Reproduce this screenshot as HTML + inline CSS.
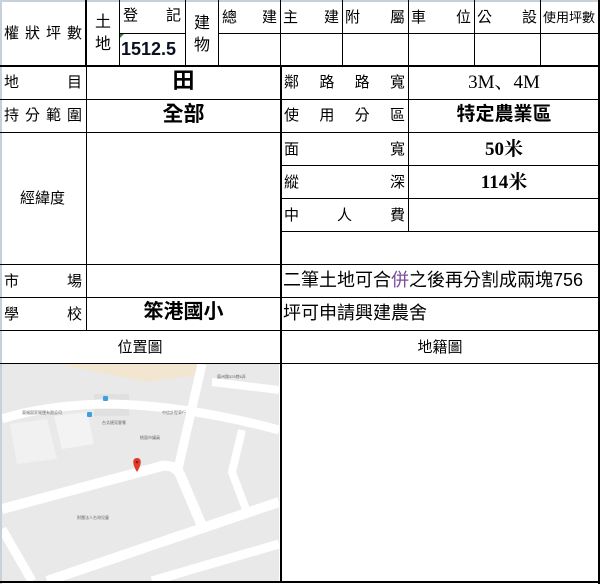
<!DOCTYPE html>
<html><head><meta charset="utf-8"><style>
*{margin:0;padding:0;box-sizing:border-box}
body{width:600px;height:584px;background:#fff;position:relative;overflow:hidden;font-family:"Liberation Sans","Noto Sans CJK TC","WenQuanYi Zen Hei",sans-serif;color:#000}
.h,.v{position:absolute;background:#000}
.t{position:absolute;white-space:nowrap;font-size:15px;line-height:1}
.j{position:absolute;display:flex;justify-content:space-between;font-size:15px;line-height:1}
.c{position:absolute;text-align:center;font-size:15px;line-height:1}
.b{font-weight:bold}
.s{font-family:"Liberation Serif","Noto Serif CJK SC",serif}
</style></head><body>
<div style="position:absolute;left:0;top:0;width:2px;height:584px;background:#c8d0dc"></div>
<div style="position:absolute;left:0;top:0;width:600px;height:2px;background:#c8d0dc"></div>
<div class="h" style="left:119px;top:33px;width:66px;height:1px"></div>
<div class="h" style="left:219px;top:33px;width:381px;height:1px"></div>
<div class="h" style="left:0;top:65px;width:600px;height:2px"></div>
<div class="h" style="left:0;top:99px;width:600px;height:1px"></div>
<div class="h" style="left:0;top:132px;width:600px;height:1px"></div>
<div class="h" style="left:280px;top:165px;width:320px;height:1px"></div>
<div class="h" style="left:280px;top:198px;width:320px;height:1px"></div>
<div class="h" style="left:280px;top:231px;width:320px;height:1px"></div>
<div class="h" style="left:0;top:264px;width:600px;height:1px"></div>
<div class="h" style="left:0;top:297px;width:600px;height:1px"></div>
<div class="h" style="left:0;top:330px;width:600px;height:1px"></div>
<div class="h" style="left:0;top:363px;width:600px;height:1px"></div>
<div class="h" style="left:0;top:581px;width:600px;height:2px"></div>
<div class="v" style="left:85px;top:0;width:2px;height:66px"></div>
<div class="v" style="left:119px;top:0;width:1px;height:66px"></div>
<div class="v" style="left:185px;top:0;width:1px;height:66px"></div>
<div class="v" style="left:218px;top:0;width:1px;height:66px"></div>
<div class="v" style="left:280px;top:0;width:1px;height:66px"></div>
<div class="v" style="left:342px;top:0;width:1px;height:66px"></div>
<div class="v" style="left:408px;top:0;width:1px;height:66px"></div>
<div class="v" style="left:474px;top:0;width:1px;height:66px"></div>
<div class="v" style="left:540px;top:0;width:1px;height:66px"></div>
<div class="v" style="left:598px;top:0;width:2px;height:584px"></div>
<div class="v" style="left:86px;top:66px;width:1px;height:264px"></div>
<div class="v" style="left:280px;top:66px;width:2px;height:516px"></div>
<div class="v" style="left:408px;top:66px;width:1px;height:165px"></div>
<div class="j" style="left:4px;top:26px;width:78px"><span>權</span><span>狀</span><span>坪</span><span>數</span></div>
<div class="c" style="left:88px;top:12px;width:30px;font-size:16px;line-height:22px">土<br>地</div>
<div class="j" style="left:123px;top:8px;width:58px"><span>登</span><span>記</span></div>
<div style="position:absolute;left:120px;top:34px;width:0;height:0;border-top:4px solid #2a8a2a;border-right:4px solid transparent"></div>
<div class="t b" style="left:121px;top:40px;font-size:18px;color:#0a1020">1512.5</div>
<div class="c" style="left:186px;top:13px;width:32px;font-size:16px;line-height:22px">建<br>物</div>
<div class="j" style="left:222px;top:10px;width:55px"><span>總</span><span>建</span></div>
<div class="j" style="left:283px;top:10px;width:56px"><span>主</span><span>建</span></div>
<div class="j" style="left:345px;top:10px;width:60px"><span>附</span><span>屬</span></div>
<div class="j" style="left:411px;top:10px;width:60px"><span>車</span><span>位</span></div>
<div class="j" style="left:477px;top:10px;width:60px"><span>公</span><span>設</span></div>
<div class="t" style="left:543px;top:11px;font-size:13px">使用坪數</div>
<div class="j" style="left:4px;top:75px;width:78px"><span>地</span><span>目</span></div>
<div class="c b" style="left:87px;top:70px;width:193px;font-size:22px">田</div>
<div class="j" style="left:4px;top:108px;width:78px"><span>持</span><span>分</span><span>範</span><span>圍</span></div>
<div class="c b" style="left:87px;top:104px;width:193px;font-size:21px">全部</div>
<div class="j" style="left:284px;top:75px;width:121px"><span>鄰</span><span>路</span><span>路</span><span>寬</span></div>
<div class="c s" style="left:409px;top:73px;width:190px;font-size:19px">3M、4M</div>
<div class="j" style="left:284px;top:108px;width:121px"><span>使</span><span>用</span><span>分</span><span>區</span></div>
<div class="c b" style="left:409px;top:105px;width:190px;font-size:19px">特定農業區</div>
<div class="t" style="left:20px;top:191px">經緯度</div>
<div class="j" style="left:284px;top:142px;width:121px"><span>面</span><span>寬</span></div>
<div class="c s b" style="left:409px;top:140px;width:190px;font-size:19px">50米</div>
<div class="j" style="left:284px;top:175px;width:121px"><span>縱</span><span>深</span></div>
<div class="c s b" style="left:409px;top:173px;width:190px;font-size:19px">114米</div>
<div class="j" style="left:284px;top:208px;width:121px"><span>中</span><span>人</span><span>費</span></div>
<div class="j" style="left:4px;top:274px;width:78px"><span>市</span><span>場</span></div>
<div class="t" style="left:283px;top:271px;font-size:18px">二筆土地可合<span style="color:#7a4a9a">併</span>之後再分割成兩塊756</div>
<div class="j" style="left:4px;top:307px;width:78px"><span>學</span><span>校</span></div>
<div class="c b" style="left:87px;top:302px;width:193px;font-size:20px">笨港國小</div>
<div class="t" style="left:283px;top:304px;font-size:18px">坪可申請興建農舍</div>
<div class="c" style="left:0;top:340px;width:280px">位置圖</div>
<div class="c" style="left:282px;top:340px;width:316px">地籍圖</div>
<svg style="position:absolute;left:2px;top:364px" width="277" height="217" viewBox="0 0 277 217">
<rect width="277" height="217" fill="#e9e9e9"/>
<path d="M55 0 L200 0 L190 12 L145 18 Z" fill="#f2e6d0"/>
<path d="M8 60 L45 55 L55 95 L15 100 Z" fill="#f1f1f1"/>
<path d="M52 52 L85 48 L92 80 L60 85 Z" fill="#f3f3f3"/>
<rect x="92" y="30" width="35" height="22" fill="#e0e0e0"/>
<g stroke="#fff" fill="none">
<path d="M0 55 Q40 42 100 40 Q180 40 277 66" stroke-width="9"/>
<path d="M0 145 L160 102 Q175 100 180 115 L200 162" stroke-width="10"/>
<path d="M200 0 L176 105" stroke-width="9"/>
<path d="M210 18 L277 26" stroke-width="8"/>
<path d="M240 66 L230 108 L245 148" stroke-width="8"/>
<path d="M45 217 L277 138" stroke-width="10"/>
<path d="M150 217 L277 180" stroke-width="9"/>
<path d="M0 165 L30 217" stroke-width="9"/>
</g>
<g font-size="4" fill="#666" font-family="Liberation Sans,Noto Sans CJK TC,sans-serif">
<text x="20" y="50">東福園家貿運有限公司</text>
<text x="100" y="60">台北捷見客餐</text>
<text x="160" y="50">中信計程車行</text>
<text x="138" y="75">桃園市議員</text>
<text x="75" y="155">財團法人台灣兒童</text>
<text x="215" y="14">廣州路325巷6弄</text>
</g>
<rect x="101" y="32" width="5" height="5" rx="1" fill="#3aa0e0"/>
<rect x="85" y="48" width="5" height="5" rx="1" fill="#3aa0e0"/>
<path d="M135 108 C130 100 130 94 135 94 C140 94 140 100 135 108 Z" fill="#e03a2e"/>
<circle cx="135" cy="98" r="1.3" fill="#8a1a1a"/>
</svg>
</body></html>
